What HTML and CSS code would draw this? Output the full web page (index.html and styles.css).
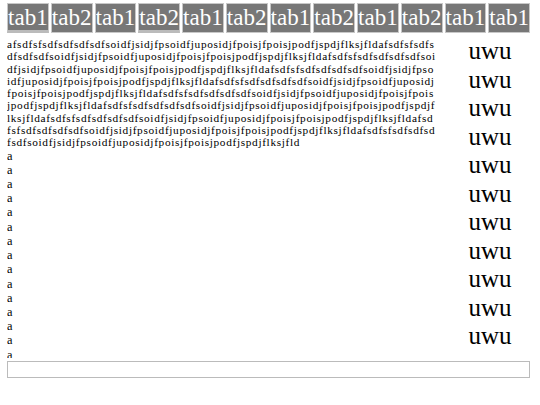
FILE: index.html
```html
<!DOCTYPE html>
<html>
<head>
<meta charset="utf-8">
<link rel="stylesheet" href="styles.css">
</head>
<body>
<div class="app">
  <div class="tabs">
    <div class="tab active">tab1</div>
    <div class="tab">tab2</div>
    <div class="tab">tab1</div>
    <div class="tab active">tab2</div>
    <div class="tab">tab1</div>
    <div class="tab">tab2</div>
    <div class="tab">tab1</div>
    <div class="tab">tab2</div>
    <div class="tab">tab1</div>
    <div class="tab">tab2</div>
    <div class="tab">tab1</div>
    <div class="tab">tab1</div>
  </div>
  <div class="main">
    <div class="left">
      <div class="para">afsdfsfsdfsdfsdfsdfsoidfjsidjfpsoidfjuposidjfpoisjfpoisjpodfjspdjflksjfldafsdfsfsdfsdfsdfsdfsoidfjsidjfpsoidfjuposidjfpoisjfpoisjpodfjspdjflksjfldafsdfsfsdfsdfsdfsdfsoidfjsidjfpsoidfjuposidjfpoisjfpoisjpodfjspdjflksjfldafsdfsfsdfsdfsdfsdfsoidfjsidjfpsoidfjuposidjfpoisjfpoisjpodfjspdjflksjfldafsdfsfsdfsdfsdfsdfsoidfjsidjfpsoidfjuposidjfpoisjfpoisjpodfjspdjflksjfldafsdfsfsdfsdfsdfsdfsoidfjsidjfpsoidfjuposidjfpoisjfpoisjpodfjspdjflksjfldafsdfsfsdfsdfsdfsdfsoidfjsidjfpsoidfjuposidjfpoisjfpoisjpodfjspdjflksjfldafsdfsfsdfsdfsdfsdfsoidfjsidjfpsoidfjuposidjfpoisjfpoisjpodfjspdjflksjfldafsdfsfsdfsdfsdfsdfsoidfjsidjfpsoidfjuposidjfpoisjfpoisjpodfjspdjflksjfldafsdfsfsdfsdfsdfsdfsoidfjsidjfpsoidfjuposidjfpoisjfpoisjpodfjspdjflksjfld</div>
      <div class="item">a</div><div class="item">a</div><div class="item">a</div><div class="item">a</div><div class="item">a</div>
      <div class="item">a</div><div class="item">a</div><div class="item">a</div><div class="item">a</div><div class="item">a</div>
      <div class="item">a</div><div class="item">a</div><div class="item">a</div><div class="item">a</div><div class="item">a</div>
      <div class="item">a</div><div class="item">a</div><div class="item">a</div><div class="item">a</div><div class="item">a</div>
    </div>
    <div class="right">
      <div>uwu</div><div>uwu</div><div>uwu</div><div>uwu</div>
      <div>uwu</div><div>uwu</div><div>uwu</div><div>uwu</div>
      <div>uwu</div><div>uwu</div><div>uwu</div><div>uwu</div>
    </div>
  </div>
  <div class="inputbox"></div>
</div>
</body>
</html>
```
FILE: styles.css
```css
html, body {
  margin: 0;
  padding: 0;
  background: #fff;
}
body {
  font-family: "Liberation Serif", "Times New Roman", serif;
  color: #000;
}
.app {
  padding: 3px 10px 0 7px;
  width: 523px;
}
.tabs {
  display: flex;
  gap: 2px;
  height: 30px;
}
.tab {
  flex: 1 1 0;
  min-width: 0;
  overflow: hidden;
  background: #777;
  color: #fff;
  font-size: 23px;
  line-height: 28px;
  border: 1px solid #c8c8c8;
  box-sizing: border-box;
  height: 30px;
  text-align: center;
  white-space: nowrap;
}
.tab.active {
  border-bottom: 3px solid #bbb;
}
.main {
  display: grid;
  grid-template-columns: 1fr 100px;
  height: 320px;
  overflow: hidden;
  margin-top: 5px;
  margin-right: -10px;
}
.para {
  font-size: 11.3px;
  line-height: 12.3px;
  letter-spacing: 0.66px;
  word-break: break-all;
  width: 430px;
}
.item {
  font-size: 12.3px;
  line-height: 14.2px;
}
.right {
  font-size: 25px;
  line-height: 28.5px;
  text-align: center;
  margin-top: -1px;
}
.inputbox {
  height: 17px;
  border: 1px solid #bbb;
  box-sizing: border-box;
  margin-top: 3px;
}
```
